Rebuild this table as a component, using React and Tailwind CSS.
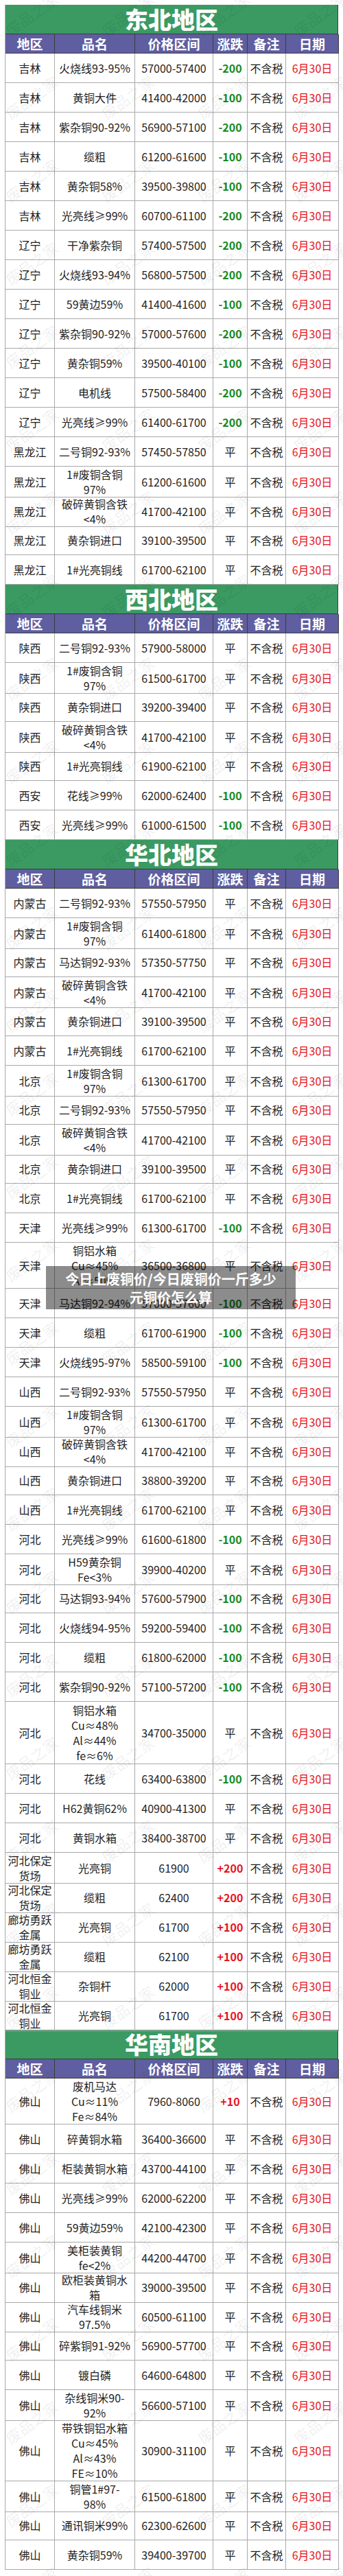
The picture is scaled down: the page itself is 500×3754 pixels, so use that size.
import React from "react";

const sections = [
  {
    title: "东北地区",
    rows: [
      ["吉林", "火烧线93-95%", "57000-57400", "-200"],
      ["吉林", "黄铜大件", "41400-42000", "-100"],
      ["吉林", "紫杂铜90-92%", "56900-57100", "-200"],
      ["吉林", "缆粗", "61200-61600", "-100"],
      ["吉林", "黄杂铜58%", "39500-39800", "-100"],
      ["吉林", "光亮线≥99%", "60700-61100", "-200"],
      ["辽宁", "干净紫杂铜", "57400-57500", "-200"],
      ["辽宁", "火烧线93-94%", "56800-57500", "-200"],
      ["辽宁", "59黄边59%", "41400-41600", "-100"],
      ["辽宁", "紫杂铜90-92%", "57000-57600", "-200"],
      ["辽宁", "黄杂铜59%", "39500-40100", "-100"],
      ["辽宁", "电机线", "57500-58400", "-200"],
      ["辽宁", "光亮线≥99%", "61400-61700", "-200"],
      ["黑龙江", "二号铜92-93%", "57450-57850", "平"],
      ["黑龙江", "1#废铜含铜\n97%", "61200-61600", "平"],
      ["黑龙江", "破碎黄铜含铁\n<4%", "41700-42100", "平"],
      ["黑龙江", "黄杂铜进口", "39100-39500", "平"],
      ["黑龙江", "1#光亮铜线", "61700-62100", "平"],
    ],
  },
  {
    title: "西北地区",
    rows: [
      ["陕西", "二号铜92-93%", "57900-58000", "平"],
      ["陕西", "1#废铜含铜\n97%", "61500-61700", "平"],
      ["陕西", "黄杂铜进口", "39200-39400", "平"],
      ["陕西", "破碎黄铜含铁\n<4%", "41700-42100", "平"],
      ["陕西", "1#光亮铜线", "61900-62100", "平"],
      ["西安", "花线≥99%", "62000-62400", "-100"],
      ["西安", "光亮线≥99%", "61000-61500", "-100"],
    ],
  },
  {
    title: "华北地区",
    rows: [
      ["内蒙古", "二号铜92-93%", "57550-57950", "平"],
      ["内蒙古", "1#废铜含铜\n97%", "61400-61800", "平"],
      ["内蒙古", "马达铜92-93%", "57350-57750", "平"],
      ["内蒙古", "破碎黄铜含铁\n<4%", "41700-42100", "平"],
      ["内蒙古", "黄杂铜进口", "39100-39500", "平"],
      ["内蒙古", "1#光亮铜线", "61700-62100", "平"],
      ["北京", "1#废铜含铜\n97%", "61300-61700", "平"],
      ["北京", "二号铜92-93%", "57550-57950", "平"],
      ["北京", "破碎黄铜含铁\n<4%", "41700-42100", "平"],
      ["北京", "黄杂铜进口", "39100-39500", "平"],
      ["北京", "1#光亮铜线", "61700-62100", "平"],
      ["天津", "光亮线≥99%", "61300-61700", "-100"],
      ["天津", "铜铝水箱\nCu≈45%\nAl≈50%", "36500-36800", "平", "h-[67px]"],
      ["天津", "马达铜92-94%", "57000-57600", "-100"],
      ["天津", "缆粗", "61700-61900", "-100"],
      ["天津", "火烧线95-97%", "58500-59100", "-100"],
      ["山西", "二号铜92-93%", "57550-57950", "平"],
      ["山西", "1#废铜含铜\n97%", "61300-61700", "平"],
      ["山西", "破碎黄铜含铁\n<4%", "41700-42100", "平"],
      ["山西", "黄杂铜进口", "38800-39200", "平"],
      ["山西", "1#光亮铜线", "61700-62100", "平"],
      ["河北", "光亮线≥99%", "61600-61800", "-100"],
      ["河北", "H59黄杂铜\nFe<3%", "39900-40200", "平"],
      ["河北", "马达铜93-94%", "57600-57900", "-100"],
      ["河北", "火烧线94-95%", "59200-59400", "-100"],
      ["河北", "缆粗", "61800-62000", "-100"],
      ["河北", "紫杂铜90-92%", "57100-57200", "-100"],
      ["河北", "铜铝水箱\nCu≈48%\nAl≈44%\nfe≈6%", "34700-35000", "平", "h-[91px]"],
      ["河北", "花线", "63400-63800", "-100"],
      ["河北", "H62黄铜62%", "40900-41300", "平"],
      ["河北", "黄铜水箱", "38400-38700", "平"],
      ["河北保定\n货场", "光亮铜", "61900", "+200"],
      ["河北保定\n货场", "缆粗", "62400", "+200"],
      ["廊坊勇跃\n金属", "光亮铜", "61700", "+100"],
      ["廊坊勇跃\n金属", "缆粗", "62100", "+100"],
      ["河北恒金\n铜业", "杂铜杆", "62000", "+100"],
      ["河北恒金\n铜业", "光亮铜", "61700", "+100"],
    ],
  },
  {
    title: "华南地区",
    rows: [
      ["佛山", "废机马达\nCu≈11%\nFe≈84%", "7960-8060", "+10", "h-[67px]"],
      ["佛山", "碎黄铜水箱", "36400-36600", "平"],
      ["佛山", "柜装黄铜水箱", "43700-44100", "平"],
      ["佛山", "光亮线≥99%", "62000-62200", "平"],
      ["佛山", "59黄边59%", "42100-42300", "平"],
      ["佛山", "美柜装黄铜\nfe<2%", "44200-44700", "平"],
      ["佛山", "欧柜装黄铜水\n箱", "39000-39500", "平"],
      ["佛山", "汽车线铜米\n97.5%", "60500-61100", "平"],
      ["佛山", "碎紫铜91-92%", "56900-57700", "平"],
      ["佛山", "镀白磷", "64600-64800", "平"],
      ["佛山", "杂线铜米90-\n92%", "56600-57100", "平"],
      ["佛山", "带铁铜铝水箱\nCu≈45%\nAl≈43%\nFE≈10%", "30900-31100", "平", "h-[90px]"],
      ["佛山", "铜管1#97-\n98%", "61500-61800", "平"],
      ["佛山", "通讯铜米99%", "62300-62600", "平"],
      ["佛山", "黄杂铜59%", "39400-39700", "平"],
    ],
  },
];

const headers = ["地区", "品名", "价格区间", "涨跌", "备注", "日期"];
const cols = "grid grid-cols-[72px_117px_114px_50px_56px_77px]";
const cell =
  "flex flex-col items-center justify-center border-r border-b border-[#a9a9a9] leading-[22px]";

const Lines = ({ text }) =>
  text.split("\n").map((l, i) => (
    <div key={i} className="whitespace-nowrap">
      {l}
    </div>
  ));

const Change = ({ v }) => {
  if (v.startsWith("-")) return <span className="font-bold text-[#178a1c]">{v}</span>;
  if (v.startsWith("+")) return <span className="font-bold text-[#e8141c]">{v}</span>;
  return <span>{v}</span>;
};

const Section = ({ title, rows }) => (
  <div>
    {/* Title bar */}
    <div className="flex h-[43px] items-center justify-center border-r border-b border-[#3c3c3c] bg-[#3a9a62] text-[34px] font-black leading-none text-white">
      {title}
    </div>

    {/* Column headers */}
    <div className={`${cols} h-[28px] bg-[#5e5ea0] text-[19px] font-bold text-white`}>
      {headers.map((h) => (
        <div key={h} className="flex items-center justify-center border-r border-b border-[#3c3c3c] leading-none">
          {h}
        </div>
      ))}
    </div>

    {/* Rows */}
    {rows.map(([region, name, price, change, h], i) => (
      <div key={i} className={`${cols} ${h || "h-[43px]"} text-[16px] text-[#1e1e1e]`}>
        <div className={cell}>
          <Lines text={region} />
        </div>
        <div className={cell}>
          <Lines text={name} />
        </div>
        <div className={cell}>{price}</div>
        <div className={cell}>
          <Change v={change} />
        </div>
        <div className={cell}>不含税</div>
        <div className={`${cell} text-[#e8141c]`}>6月30日</div>
      </div>
    ))}
  </div>
);

const Watermarks = () => {
  const marks = [];
  for (let r = 0; r < 32; r++) {
    for (let c = 0; c < 4; c++) {
      marks.push({ key: `${r}-${c}`, left: c * 140 + 2, top: r * 121 + 4 });
    }
  }
  return (
    <div className="pointer-events-none absolute inset-0 overflow-hidden">
      {marks.map((m) => (
        <div
          key={m.key}
          className="absolute -rotate-[36deg] whitespace-nowrap text-[22px] text-black/[0.07]"
          style={{ left: m.left, top: m.top }}
        >
          废品之家
        </div>
      ))}
    </div>
  );
};

export default function App() {
  return (
    <div className="relative h-[3754px] w-[500px] bg-white font-['Noto_Sans_CJK_SC',sans-serif]">
      <div className="px-[7px] pt-[7px]">
        <div className="border-l border-[#a9a9a9]">
          {sections.map((s) => (
            <Section key={s.title} {...s} />
          ))}
        </div>
      </div>

      <Watermarks />

      {/* Caption overlay */}
      <div className="absolute left-[67px] top-[1845px] flex h-[63px] w-[364px] flex-col items-center justify-center bg-black/45 text-[20px] font-bold leading-[27px] text-white">
        <div>今日上废铜价/今日废铜价一斤多少</div>
        <div>元铜价怎么算</div>
      </div>
    </div>
  );
}
